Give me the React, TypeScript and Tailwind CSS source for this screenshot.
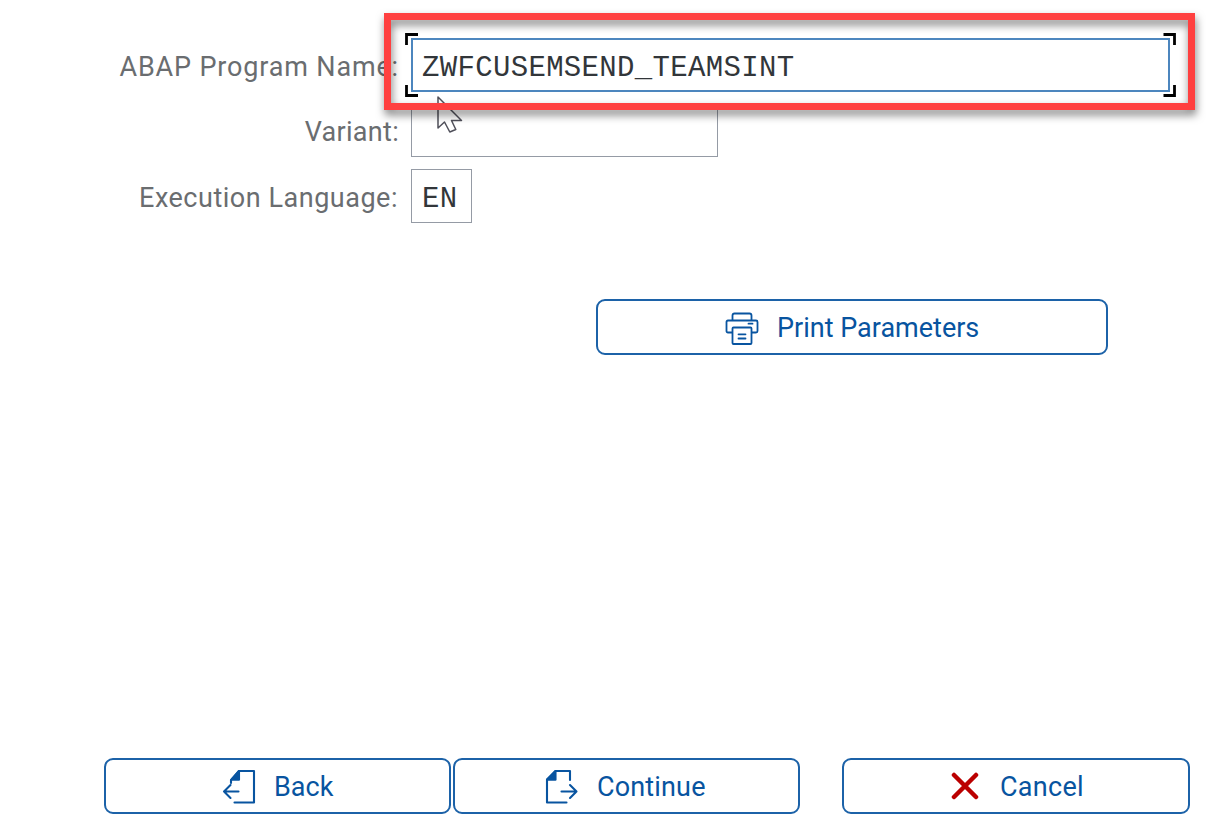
import type { ReactNode } from 'react';

function FieldRow({ label, className, children }: { label: ReactNode; className: string; children: ReactNode }) {
  return (
    <div className={`flex items-center ${className}`}>
      <label className="w-[399px] pt-[4px] text-right text-[27px] leading-none whitespace-nowrap text-[#6a6d70]">{label}</label>
      <div className="ml-[12px]">{children}</div>
    </div>
  );
}

function ActionButton({ icon, label, className }: { icon: ReactNode; label: ReactNode; className: string }) {
  return (
    <button
      className={`flex h-[56px] items-center rounded-[9px] border-2 border-[#1c62a8] bg-white text-[27px] leading-none whitespace-nowrap text-[#0854a0] ${className}`}
    >
      {icon}
      {label}
    </button>
  );
}

function PrinterIcon() {
  return (
    <svg className="mt-[3px] h-[34px] w-[34px] shrink-0" viewBox="0 0 34 34" fill="none" stroke="currentColor" strokeWidth="1.8" strokeLinejoin="round" strokeLinecap="round">
      <path d="M7.5 8V3.5Q7.5 1.5 9.500 1.500H24.500Q26.500 1.500 26.500 3.500V8" />
      <path d="M7 20.500H3Q1.500 20.500 1.500 19V10Q1.500 8.500 3 8.500H31Q32.500 8.500 32.500 10V19Q32.500 20.500 31 20.500H27" />
      <rect x="7.500" y="15.500" width="19" height="16.500" rx="1" />
      <path d="M23.500 11.700H27.500M13.500 22.300H20.500M13.500 26.500H20.500" />
    </svg>
  );
}

function BackIcon() {
  return (
    <svg className="mt-[2px] h-[36px] w-[34px] shrink-0" viewBox="0 0 34 36" fill="none" stroke="currentColor" strokeWidth="2.100" strokeLinecap="round" strokeLinejoin="round">
      <path d="M9.500 10.500L17 2H32V33.500H12.500" />
      <path d="M9.500 10.800L17 2V10.800Z" fill="currentColor" />
      <path d="M8.500 16L2 22.500L8.500 29M2 22.500H16.500M9 11V14" />
    </svg>
  );
}

function ContinueIcon() {
  return (
    <svg className="mt-[2px] h-[36px] w-[34px] shrink-0" viewBox="0 0 34 36" fill="none" stroke="currentColor" strokeWidth="2.100" strokeLinecap="round" strokeLinejoin="round">
      <path d="M25 11V2H10.500L2 10.500V33.500H21.500" />
      <path d="M2 10.800L10.500 2V10.800Z" fill="currentColor" />
      <path d="M25 16L31.500 22.500L25 29M31.500 22.500H16.500" />
    </svg>
  );
}

function CancelIcon() {
  return (
    <svg className="h-[28px] w-[28px] shrink-0" viewBox="0 0 28 28" fill="none" stroke="#bb0000" strokeWidth="4.500" strokeLinecap="round">
      <path d="M3 3L25 25M25 3L3 25" />
    </svg>
  );
}

function FocusCorners() {
  return (
    <svg className="pointer-events-none absolute -top-[7px] -left-[8px] h-[64px] w-[772px]" viewBox="0 0 772 64" fill="none" stroke="#000" strokeWidth="2.800">
      <path d="M1.500 12V1.500H13M758.500 1.500H769.500V12M1.500 52V62.500H13M758.500 62.500H769.500V52" />
    </svg>
  );
}

function Cursor() {
  return (
    <svg className="pointer-events-none absolute top-[95px] left-[436px] h-[40px] w-[28px]" viewBox="0 0 28 40" fill="#fff" stroke="#50505a" strokeWidth="1.500" strokeLinejoin="round">
      <path d="M2 2V33L8.500 27L13.800 37L19.800 34.500L15.500 25.500H25.500Z" />
    </svg>
  );
}

export default function App() {
  return (
    <main className="relative flex h-[832px] w-[1217px] flex-col overflow-hidden bg-white font-['Roboto',sans-serif]">
      <section className="flex flex-col pt-[38px]">
        <FieldRow className="h-[54px]" label={<span className="tracking-[0.840px]">ABAP Program Name:</span>}>
          <div className="relative flex h-[54px] w-[759px] items-center border-2 border-[#4c86be] pl-[9px] font-['Liberation_Mono',monospace] text-[29px] tracking-[0.330px] text-[#32363a]">
            <span className="pt-[7px] leading-none">ZWFCUSEMSEND_TEAMSINT</span>
            <FocusCorners />
          </div>
        </FieldRow>
        <FieldRow className="mt-[11px] h-[54px]" label={<span className="tracking-[0.300px]">Variant:</span>}>
          <div className="h-[54px] w-[307px] border-[1.500px] border-[#959ba5]" />
        </FieldRow>
        <FieldRow className="mt-[12px] h-[54px]" label={<span className="mr-px tracking-[0.520px]">Execution Language:</span>}>
          <div className="flex h-[54px] w-[61px] items-center border-[1.500px] border-[#959ba5] pl-[10px] font-['Liberation_Mono',monospace] text-[29px] tracking-[0.330px] text-[#32363a]">
            <span className="pt-[7px] leading-none">EN</span>
          </div>
        </FieldRow>
      </section>

      <section className="mt-[76px] flex pl-[596px]">
        <ActionButton className="w-[512px] gap-[18px] pl-[127px]" icon={<PrinterIcon />} label={<span className="pt-[3px]">Print Parameters</span>} />
      </section>

      <footer className="mt-auto flex pb-[18px] pl-[104px]">
        <ActionButton className="w-[347px] gap-[18px] pl-[116px]" icon={<BackIcon />} label={<span className="pt-[3px]">Back</span>} />
        <ActionButton className="ml-[2px] w-[347px] gap-[18px] pl-[90px]" icon={<ContinueIcon />} label={<span className="pt-[3px] tracking-[0.150px]">Continue</span>} />
        <ActionButton className="ml-[42px] w-[348px] gap-[21px] pl-[107px]" icon={<CancelIcon />} label={<span className="pt-[3px] tracking-[0.300px]">Cancel</span>} />
      </footer>

      <Cursor />
      <div className="pointer-events-none absolute top-[13px] left-[384px] h-[97px] w-[811px] border-[7px] border-[#ff4040] drop-shadow-[1px_5px_4px_rgba(0,0,0,0.5)]" />
    </main>
  );
}
